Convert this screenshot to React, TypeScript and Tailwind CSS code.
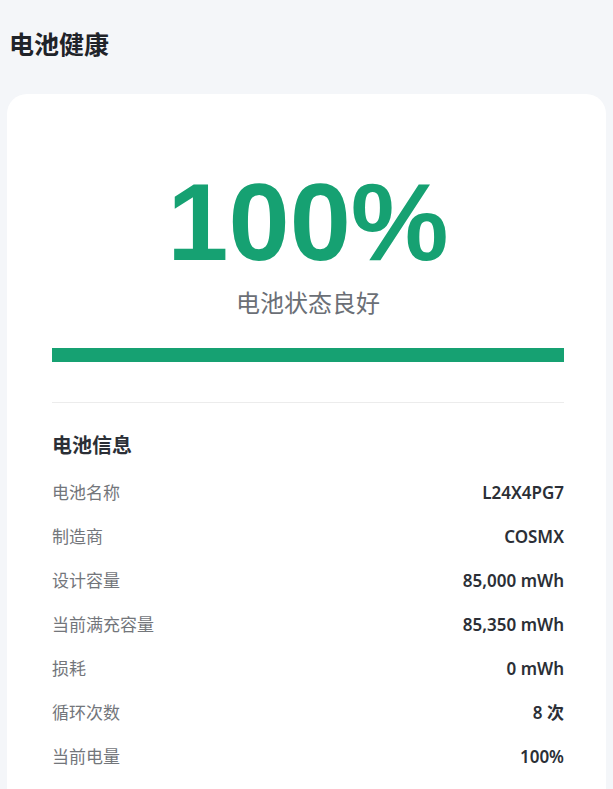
import React from "react";

const rows: [string, string][] = [
  ["电池名称", "L24X4PG7"],
  ["制造商", "COSMX"],
  ["设计容量", "85,000 mWh"],
  ["当前满充容量", "85,350 mWh"],
  ["损耗", "0 mWh"],
  ["循环次数", "8 次"],
  ["当前电量", "100%"],
  ["电源状态", "已连接"],
];

export default function App() {
  return (
    <div
      className="min-h-screen bg-[#f4f6f9] px-[7px] pt-[26px]"
      style={{ fontFamily: '"Noto Sans", "Noto Sans CJK SC", sans-serif' }}
    >
      <h1 className="pl-[2px] text-[25px] font-semibold leading-[36px] text-[#1f2329]">电池健康</h1>
      <div className="mt-[32px] rounded-[20px] bg-white pl-[45px] pr-[42px] pt-[69px] pb-10">
        <div className="flex flex-col items-center">
          <div
            className="text-[110px] font-bold leading-[118px] text-[#16a172]"
            style={{ fontFamily: '"Liberation Sans", Arial, sans-serif' }}
          >
            100%
          </div>
          <div className="mt-[6px] text-[24px] leading-[32px] text-[#6b6f76]">电池状态良好</div>
        </div>
        <div className="mt-[29px] h-[14px] w-full bg-[#eef0f2]">
          <div className="h-full bg-[#16a172]" style={{ width: "100%" }} />
        </div>
        <div className="mt-[40px] h-px bg-[#ececec]" />
        <h2 className="mt-[30px] text-[20px] font-bold leading-[26px] text-[#2b2f36]">电池信息</h2>
        <div className="mt-[12px] flex flex-col">
          {rows.map(([k, v]) => (
            <div key={k} className="flex h-[44px] items-center justify-between text-[17px]">
              <span className="text-[#73767b]">{k}</span>
              <span className="font-semibold text-[#2b2f36]">{v}</span>
            </div>
          ))}
        </div>
      </div>
    </div>
  );
}
